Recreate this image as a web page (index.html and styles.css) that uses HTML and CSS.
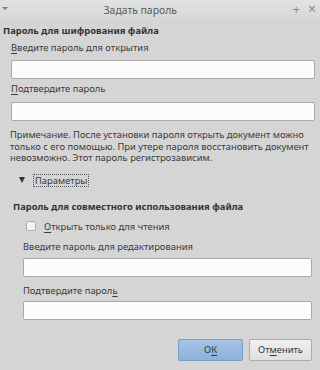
FILE: index.html
```html
<!DOCTYPE html>
<html lang="ru">
<head>
<meta charset="utf-8">
<title>Задать пароль</title>
<link rel="stylesheet" href="styles.css">
</head>
<body>
<div class="window">
  <div class="titlebar">
    <span class="menu-arrow"></span>
    <span class="title">Задать пароль</span>
    <span class="tb-btn plus">+</span>
    <span class="tb-btn close">×</span>
  </div>
  <div class="content">
    <div class="heading h1">Пароль для шифрования файла</div>
    <div class="label l1"><u>В</u>ведите пароль для открытия</div>
    <div class="input i1"></div>
    <div class="label l2"><u>П</u>одтвердите пароль</div>
    <div class="input i2"></div>
    <div class="note">Примечание. После установки пароля открыть документ можно только с его помощью. При утере пароля восстановить документ невозможно. Этот пароль регистрозависим.</div>
    <div class="expander"><span class="tri"></span><span class="exp-label">Параметры</span></div>
    <div class="heading h2">Пароль для совместного использования файла</div>
    <div class="check-row"><span class="checkbox"></span><span><u>О</u>ткрыть только для чтения</span></div>
    <div class="label l3">Введите пароль для редактирования</div>
    <div class="input i3"></div>
    <div class="label l4">Подтвердите парол<u>ь</u></div>
    <div class="input i4"></div>
    <div class="buttons">
      <div class="btn ok">О<u>К</u></div>
      <div class="btn cancel">От<u>м</u>енить</div>
    </div>
  </div>
</div>
</body>
</html>
```
FILE: styles.css
```css
html, body {
  margin: 0;
  padding: 0;
}
body {
  width: 320px;
  height: 370px;
  overflow: hidden;
  background: #d5d5d5;
  font-family: "Noto Sans", "Open Sans", sans-serif;
  font-size: 9.4px;
  color: #3a3a3a;
}
u {
  text-decoration-thickness: 1px;
  text-underline-offset: 2px;
}
.window {
  display: flex;
  flex-direction: column;
  height: 370px;
}
.titlebar {
  height: 20px;
  flex: none;
  display: flex;
  align-items: center;
  background: linear-gradient(#e2e2e2, #d7d7d7);
  color: #5a5a5a;
}
.menu-arrow {
  width: 0;
  height: 0;
  margin-left: 2px;
  margin-top: -3px;
  border-left: 3px solid transparent;
  border-right: 3px solid transparent;
  border-top: 3px solid #7a7a7a;
}
.title {
  flex: 1;
  text-align: center;
  padding-right: 20px;
  font-size: 10.4px;
}
.tb-btn {
  color: #8a8a8a;
  font-size: 13px;
  line-height: 12px;
  margin-top: -2px;
}
.plus {
  margin-right: 8px;
}
.close {
  margin-right: 4px;
  font-size: 14px;
}
.content {
  display: flex;
  flex-direction: column;
  align-items: flex-start;
}
.heading {
  font-weight: bold;
  line-height: 13px;
  color: #333;
}
.h1 {
  margin: 4px 0 0 3px;
}
.label {
  line-height: 13px;
}
.l1 {
  margin: 4px 0 0 11px;
}
.input {
  height: 17px;
  background: #fcfcfc;
  border: 1px solid #a9a9a9;
  border-radius: 2px;
}
.i1, .i2 {
  margin-left: 11px;
  width: 302px;
}
.i1 {
  margin-top: 6px;
}
.l2 {
  margin: 3px 0 0 11px;
}
.i2 {
  margin-top: 7px;
}
.note {
  margin: 8px 0 0 10px;
  width: 306px;
  line-height: 11.5px;
}
.expander {
  margin: 10px 0 0 19px;
  display: flex;
  align-items: center;
  gap: 8px;
}
.tri {
  width: 0;
  height: 0;
  border-left: 3.5px solid transparent;
  border-right: 3.5px solid transparent;
  border-top: 6px solid #333;
}
.exp-label {
  border: 1px dotted #555;
  padding: 0 1px;
  line-height: 11px;
}
.h2 {
  margin: 13px 0 0 13px;
}
.check-row {
  margin: 7px 0 0 26px;
  display: flex;
  align-items: center;
  gap: 8px;
  line-height: 13px;
}
.checkbox {
  width: 8px;
  height: 8px;
  background: #f4f4f4;
  border: 1px solid #b0b0b0;
  border-radius: 2px;
}
.l3 {
  margin: 7px 0 0 23px;
}
.i3, .i4 {
  margin-left: 23px;
  width: 287px;
}
.i3 {
  margin-top: 5px;
}
.l4 {
  margin: 7px 0 0 23px;
}
.i4 {
  margin-top: 4px;
}
.buttons {
  align-self: stretch;
  display: flex;
  justify-content: flex-end;
  gap: 6px;
  margin: 19px 8px 0 0;
}
.btn {
  height: 20px;
  line-height: 20px;
  text-align: center;
  border-radius: 2px;
  color: #333;
}
.ok {
  width: 63px;
  background: linear-gradient(#a6c4e6, #8cb1db);
  border: 1px solid #7c9ec6;
}
.cancel {
  width: 61px;
  background: linear-gradient(#f0f0f0, #e0e0e0);
  border: 1px solid #ababab;
}
```
